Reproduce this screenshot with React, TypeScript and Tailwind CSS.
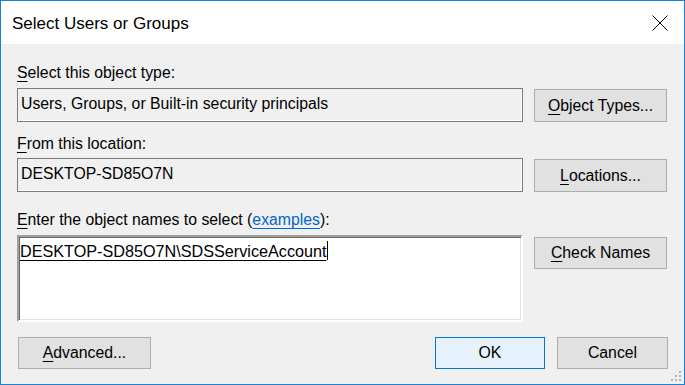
import type { ReactNode } from "react"

const font = { fontFamily: '"Liberation Sans", Arial, sans-serif' }

const Key = ({ children }: { children: ReactNode }) => (
  <span className="underline underline-offset-[3px] decoration-1">{children}</span>
)

const Btn = ({
  children,
  primary,
  className = "",
}: {
  children: ReactNode
  primary?: boolean
  className?: string
}) => (
  <button
    className={
      "flex items-center justify-center border text-[15.8px] leading-[18px] text-black " +
      (primary ? "border-[#0078d7] bg-[#e5f1fb] " : "border-[#adadad] bg-[#e1e1e1] ") +
      className
    }
  >
    {children}
  </button>
)

const ReadBox = ({ value }: { value: string }) => (
  <div className="h-[34px] w-[506px] border border-[#7a7a7a] bg-[#f0f0f0] pl-[3px] pt-[6px] shadow-[inset_-1px_-1px_0_#ffffff] text-[15.8px] leading-[18px] text-black">
    {value}
  </div>
)

const Gripper = () => (
  <svg width="12" height="12" viewBox="0 0 12 12" className="absolute bottom-[1px] right-[1px]">
    {[
      [8, 0],
      [4, 4],
      [8, 4],
      [0, 8],
      [4, 8],
      [8, 8],
    ].map(([x, y]) => (
      <rect key={`${x}-${y}`} x={x} y={y} width="2" height="2" fill="#b4b4b4" />
    ))}
  </svg>
)

export default function App() {
  return (
    <div
      style={font}
      className="relative flex h-[385px] w-[685px] flex-col border border-[#1883d7] bg-[#f0f0f0] text-black"
    >
      {/* title bar */}
      <header className="flex h-[43px] shrink-0 items-start justify-between bg-white pl-[11px] pr-[16px] pt-[13px]">
        <h1 className="text-[17px] leading-[20px] font-normal">Select Users or Groups</h1>
        <svg width="16" height="16" viewBox="0 0 16 16" className="mt-[1px]">
          <path d="M0.5 0.5 L15.5 15.5 M15.5 0.5 L0.5 15.5" stroke="#000" strokeWidth="1" />
        </svg>
      </header>

      <main className="flex flex-col px-[16px] pt-[20px] text-[15.8px] leading-[18px]">
        <label>
          <Key>S</Key>elect this object type:
        </label>
        <div className="mt-[6px] flex items-start gap-[11px]">
          <ReadBox value="Users, Groups, or Built-in security principals" />
          <Btn className="mt-[1px] h-[33px] w-[133px]">
            <Key>O</Key>bject Types...
          </Btn>
        </div>

        <label className="mt-[13px]">
          <Key>F</Key>rom this location:
        </label>
        <div className="mt-[5px] flex items-start gap-[11px]">
          <ReadBox value="DESKTOP-SD85O7N" />
          <Btn className="mt-[1px] h-[33px] w-[133px]">
            <Key>L</Key>ocations...
          </Btn>
        </div>

        <label className="mt-[19px]">
          <Key>E</Key>nter the object names to select (
          <a className="text-[#0066cc] underline underline-offset-[3px] decoration-1">examples</a>):
        </label>
        <div className="mt-[6px] flex items-start gap-[11px]">
          <div className="h-[87px] w-[506px] border-2 border-t-[#a0a0a0] border-l-[#a0a0a0] border-b-[#ffffff] border-r-[#ffffff] bg-white pl-[1px] pt-[1px] text-[16.2px] shadow-[inset_1px_1px_0_#696969,inset_-1px_-1px_0_#e3e3e3]">
            <span className="underline underline-offset-[3px] decoration-1">DESKTOP-SD85O7N\SDSServiceAccount</span>
            <span className="ml-[1px] inline-block h-[19px] w-px translate-y-[3px] bg-black" />
          </div>
          <Btn className="mt-[2px] h-[32px] w-[133px]">
            <Key>C</Key>heck Names
          </Btn>
        </div>

        <div className="mt-[15px] flex items-center">
          <Btn className="ml-[1px] h-[32px] w-[133px]">
            <Key>A</Key>dvanced...
          </Btn>
          <Btn primary className="ml-auto h-[32px] w-[110px]">
            OK
          </Btn>
          <Btn className="ml-[12px] h-[32px] w-[111px]">Cancel</Btn>
        </div>
      </main>

      <Gripper />
    </div>
  )
}
